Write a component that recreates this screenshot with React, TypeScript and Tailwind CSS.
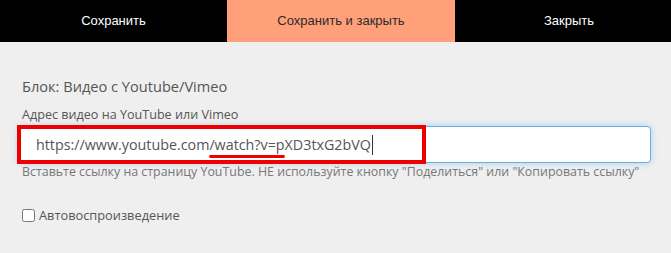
export default function App() {
  return (
    <div className="w-[671px] h-[253px] overflow-hidden bg-[#efefef]">
      {/* Top action bar */}
      <div className="flex h-[42px] bg-black text-[13px] font-['Liberation_Sans',Arial,sans-serif]">
        <button className="w-[227px] shrink-0 flex items-center justify-center text-white">Сохранить</button>
        <button className="w-[228px] shrink-0 flex items-center justify-center bg-[#ffa07a] text-[#2b2b2b]">
          Сохранить и закрыть
        </button>
        <button className="w-[228px] shrink-0 flex items-center justify-center text-white">Закрыть</button>
      </div>

      <div className="pl-[22px] pr-[20px] pt-[34px] font-['Open_Sans',sans-serif] text-[#555]">
        <div className="text-[14.6px] leading-[20px]">Блок: Видео с Youtube/Vimeo</div>
        <div className="mt-[11px] text-[12.6px] leading-[16px]">Адрес видео на YouTube или Vimeo</div>

        <div className="relative -ml-[4px] mt-[3px] w-[633px]">
          <div className="h-[37px] flex items-center pl-[17px] rounded-[4px] border border-[#66afe9] bg-white shadow-[0_0_6px_rgba(102,175,233,0.5)] text-[14.3px]">
            <span>https://www.youtube.com</span>
            <span className="underline decoration-[#ee0000] decoration-[3px] underline-offset-[5px]">/watch?v=p</span>
            <span>XD3txG2bVQ</span>
            <span className="ml-px h-[20px] w-px bg-[#333]" />
          </div>
          {/* red highlight frame */}
          <div className="absolute -left-px -top-px w-[409px] h-[39px] border-4 border-[#ee0000]" />
        </div>

        <div className="mt-[2px] text-[12.4px] leading-[14px] text-[#777] whitespace-nowrap">
          Вставьте ссылку на страницу YouTube. НЕ используйте кнопку "Поделиться" или "Копировать ссылку"
        </div>

        <label className="mt-[28px] flex items-center gap-[4px] text-[12.8px] leading-[16px]">
          <input type="checkbox" className="w-[13px] h-[13px] m-0" />
          <span>Автовоспроизведение</span>
        </label>
      </div>
    </div>
  )
}
